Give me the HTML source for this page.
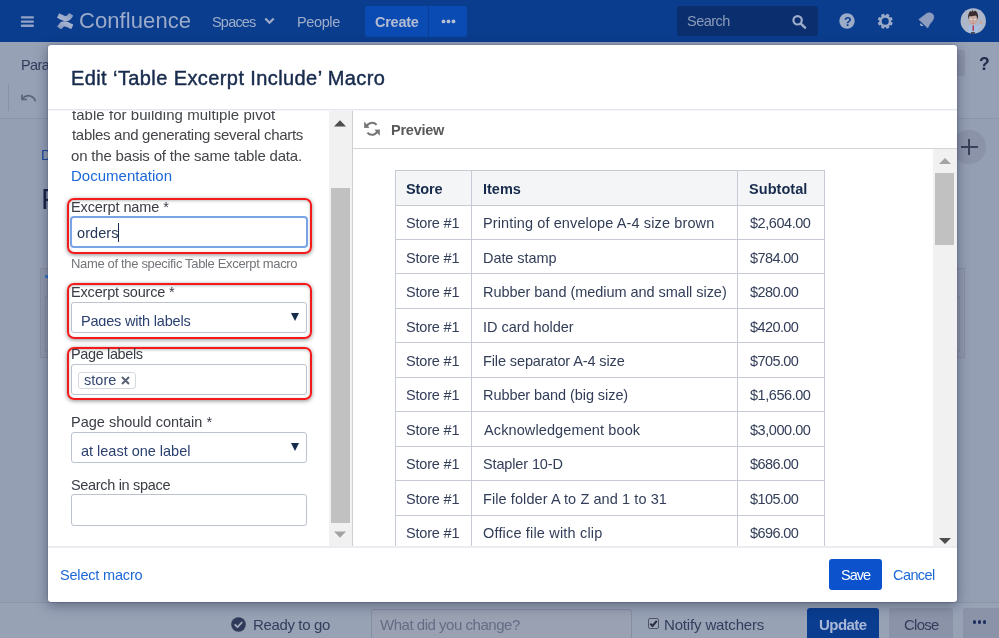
<!DOCTYPE html>
<html><head><meta charset="utf-8"><title>Edit Table Excerpt Include Macro</title>
<style>
*{box-sizing:border-box;margin:0;padding:0}
html,body{width:999px;height:638px;overflow:hidden}
body{font-family:"Liberation Sans",sans-serif;background:#959fb3;position:relative;color:#172b4d}
.a{position:absolute}
.t{position:absolute;white-space:pre;will-change:transform}
.red{position:absolute;border:2px solid #f51a1a;border-radius:7px;box-shadow:0 1px 4px rgba(0,0,0,.45), inset 0 1px 3px rgba(0,0,0,.25)}
.inp{position:absolute;border:1px solid #bcc3ce;border-radius:3px;background:#fff;overflow:hidden}
.arr{position:absolute;width:0;height:0;border-left:4px solid transparent;border-right:4px solid transparent;border-top:8px solid #172b4d}
.hl{position:absolute;height:1px}
.vl{position:absolute;width:1px}
</style></head><body>
<div class="a" style="left:0.00px;top:42.00px;width:999.00px;height:76.00px;background:#97a1b5"></div>
<div class="a" style="left:0.00px;top:117.50px;width:999.00px;height:1.00px;background:#8d95a8"></div>
<div class="t" style="left:21px;top:57px;font-size:14.5px;line-height:16px;font-weight:normal;color:#343e5c;letter-spacing:-0.588px;">Paragraph</div>
<div class="a" style="left:8.00px;top:84.00px;width:1.00px;height:27.00px;background:#8a91a3"></div>
<svg class="a" style="left:20px;top:92.200px" width="18" height="13" viewBox="0 0 18 13"><path d="M2 2.5v5h5M2.3 7.2C4.5 4.2 8 3 11 4.2c2.300.9 3.800 2.700 4.600 5" fill="none" stroke="#5b647c" stroke-width="1.700"/></svg>
<div class="t" style="left:41px;top:147px;font-size:14.5px;line-height:16px;font-weight:normal;color:#1f4aa0;letter-spacing:-4.500px;">D</div>
<div class="t" style="left:41px;top:182px;font-size:30px;line-height:33px;font-weight:normal;color:#1c2548;letter-spacing:0.900px;">P</div>
<div class="a" style="left:40.00px;top:268.00px;width:20.00px;height:89.60px;border:1px solid #8890a4;background:#929aae"></div>
<div class="a" style="left:45.00px;top:274.50px;width:7.00px;height:3.00px;background:#3a78c8"></div>
<div class="a" style="left:45.00px;top:296.00px;width:15.00px;height:56.00px;border:1px solid #8890a4;background:#959db0"></div>
<div class="a" style="left:940.00px;top:268.00px;width:24.50px;height:89.60px;border:1px solid #8890a4;background:#929aae"></div>
<div class="a" style="left:940.00px;top:296.00px;width:20.00px;height:56.00px;border:1px solid #8890a4;background:#959db0"></div>
<div class="a" style="left:944.00px;top:49.60px;width:20.70px;height:26.40px;background:#8d95a9;border-radius:3px"></div>
<div class="t" style="left:979px;top:54px;font-size:17.5px;line-height:20px;font-weight:bold;color:#1f2a4a;letter-spacing:-5.400px;">?</div>
<div class="a" style="left:952.00px;top:130.00px;width:34.00px;height:34.00px;background:#8b93a8;border-radius:50%"></div>
<div class="a" style="left:960.70px;top:145.90px;width:17.00px;height:2.30px;background:#39425a"></div>
<div class="a" style="left:968.00px;top:138.80px;width:2.30px;height:16.70px;background:#39425a"></div>
<div class="a" style="left:0.00px;top:601.50px;width:999.00px;height:36.50px;background:#98a2b5;border-top:1px solid #8b94a8"></div>
<svg class="a" style="left:231px;top:617px" width="15" height="15" viewBox="0 0 15 15"><circle cx="7.500" cy="7.500" r="7.300" fill="#2f3a5a"/><path d="M4.200 7.800l2.300 2.300 4.300-4.600" fill="none" stroke="#a4abbb" stroke-width="1.800" stroke-linecap="round" stroke-linejoin="round"/></svg>
<div class="t" style="left:253px;top:616px;font-size:15px;line-height:17px;font-weight:normal;color:#343e5c;letter-spacing:-0.360px;">Ready to go</div>
<div class="a" style="left:370.50px;top:609.00px;width:261.50px;height:36.00px;border:1px solid #878ea0;border-radius:3px;background:#9aa1b2"></div>
<div class="t" style="left:380px;top:616px;font-size:15px;line-height:17px;font-weight:normal;color:#646d85;letter-spacing:-0.474px;">What did you change?</div>
<div class="a" style="left:647.50px;top:617.50px;width:11.00px;height:11.00px;border:1px solid #4e566b;border-radius:2px;background:#9ea5b5"></div>
<svg class="a" style="left:647.5px;top:617.5px" width="11" height="11" viewBox="0 0 11 11"><path d="M2.300 5.600l2.200 2.300 4.300-5" fill="none" stroke="#262d44" stroke-width="2"/></svg>
<div class="t" style="left:664px;top:616px;font-size:15px;line-height:17px;font-weight:normal;color:#343e5c;letter-spacing:-0.157px;">Notify watchers</div>
<div class="a" style="left:807.00px;top:608.20px;width:71.70px;height:36.80px;background:#0a3d8f;border-radius:3px"></div>
<div class="t" style="left:819px;top:616px;font-size:15px;line-height:17px;font-weight:bold;color:#a9b8d6;letter-spacing:-0.540px;">Update</div>
<div class="a" style="left:889.30px;top:608.20px;width:63.40px;height:36.80px;background:#8b93a8;border-radius:3px"></div>
<div class="t" style="left:904px;top:616px;font-size:15px;line-height:17px;font-weight:normal;color:#343e5c;letter-spacing:-0.725px;">Close</div>
<div class="a" style="left:963.30px;top:608.20px;width:39.70px;height:36.80px;background:#8b93a8;border-radius:3px"></div>
<div class="a" style="left:972.60px;top:620.30px;width:3.40px;height:3.40px;background:#1d2f5f;border-radius:50%"></div>
<div class="a" style="left:977.80px;top:620.30px;width:3.40px;height:3.40px;background:#1d2f5f;border-radius:50%"></div>
<div class="a" style="left:983.00px;top:620.30px;width:3.40px;height:3.40px;background:#1d2f5f;border-radius:50%"></div>
<div class="a" style="left:0.00px;top:0.00px;width:999.00px;height:42.00px;background:#0b3d8e"></div>
<svg class="a" style="left:20px;top:15px" width="15" height="13" viewBox="20 15 15 13"><g fill="#92a2c4"><rect x="20.800" y="16.200" width="13.200" height="2.400" rx="1.100"/><rect x="20.800" y="20.400" width="13.200" height="2.400" rx="1.100"/><rect x="20.800" y="24.600" width="13.200" height="2.400" rx="1.100"/></g></svg>
<svg class="a" style="left:56.8px;top:12.600px" width="16.400" height="16.400" viewBox="1.500 1.500 29 29"><defs><linearGradient id="lg1" x1="0" y1="1" x2="1" y2="0"><stop offset="0" stop-color="#8093bb"/><stop offset="1" stop-color="#b6c0d6"/></linearGradient><linearGradient id="lg2" x1="1" y1="0" x2="0" y2="1"><stop offset="0" stop-color="#8093bb"/><stop offset="1" stop-color="#b6c0d6"/></linearGradient></defs><g>
<path fill="url(#lg1)" d="M3.100 23.600c-.3.500-.7 1.100-.9 1.500a.96.960 0 0 0 .32 1.300l6 3.700a.96.960 0 0 0 1.330-.32c.24-.4.550-.93.890-1.490 2.390-3.940 4.790-3.460 9.120-1.390l5.970 2.840a.96.960 0 0 0 1.290-.48l2.870-6.490a.96.960 0 0 0-.48-1.260c-1.260-.59-3.770-1.770-6.020-2.860-8.120-3.940-15.020-3.690-19.460 3.950z"/>
<path fill="url(#lg2)" d="M28.900 8.400c.3-.5.700-1.100.9-1.500a.96.960 0 0 0-.32-1.300l-6-3.700a.96.960 0 0 0-1.370.32c-.24.400-.55.930-.89 1.490-2.390 3.940-4.790 3.460-9.120 1.390L6.170 2.270a.96.960 0 0 0-1.290.48L2.010 9.240a.96.960 0 0 0 .48 1.260c1.260.590 3.770 1.770 6.020 2.860 8.120 3.930 15.020 3.670 19.460-3.960z"/></g></svg>
<div class="t" style="left:79px;top:8px;font-size:22px;line-height:25px;font-weight:normal;color:#9babc9;letter-spacing:0.078px;">Confluence</div>
<div class="t" style="left:212px;top:14px;font-size:14.5px;line-height:16px;font-weight:normal;color:#9eadca;letter-spacing:-0.800px;">Spaces</div>
<svg class="a" style="left:264px;top:17px" width="11" height="8" viewBox="0 0 11 8"><path d="M1.300 1.500l4.200 4.200 4.200-4.200" fill="none" stroke="#9eadca" stroke-width="2.200"/></svg>
<div class="t" style="left:297px;top:14px;font-size:14.5px;line-height:16px;font-weight:normal;color:#9eadca;letter-spacing:-0.380px;">People</div>
<div class="a" style="left:364.70px;top:5.60px;width:102.30px;height:31.40px;background:#0a4bb3;border-radius:3px"></div>
<div class="a" style="left:428.00px;top:5.60px;width:1.00px;height:31.40px;background:#0b3f96"></div>
<div class="t" style="left:375px;top:14px;font-size:14.5px;line-height:16px;font-weight:bold;color:#b4bdd2;letter-spacing:-0.260px;">Create</div>
<svg class="a" style="left:441.2px;top:19px" width="5" height="5"><circle cx="2.5" cy="2.400" r="1.900" fill="#b4bdd2"/></svg>
<svg class="a" style="left:446.3px;top:19px" width="5" height="5"><circle cx="2.5" cy="2.400" r="1.900" fill="#b4bdd2"/></svg>
<svg class="a" style="left:451.4px;top:19px" width="5" height="5"><circle cx="2.5" cy="2.400" r="1.900" fill="#b4bdd2"/></svg>
<div class="a" style="left:677.00px;top:5.80px;width:141.00px;height:30.20px;background:#0b2f6e;border-radius:3px"></div>
<div class="t" style="left:687px;top:13px;font-size:14.5px;line-height:16px;font-weight:normal;color:#8a9aba;letter-spacing:-0.520px;">Search</div>
<svg class="a" style="left:791px;top:14px" width="16" height="15" viewBox="0 0 16 15"><circle cx="6.600" cy="6.300" r="4.200" fill="none" stroke="#9eadca" stroke-width="2.200"/><path d="M9.800 9.600l4.200 4" stroke="#9eadca" stroke-width="2.600" stroke-linecap="round"/></svg>
<svg class="a" style="left:839.3px;top:13.300px" width="16" height="16" viewBox="0 0 16 16"><circle cx="8" cy="8" r="7.700" transform="translate(0,0)" fill="#9cabc8"/></svg>
<div class="t" style="left:844px;top:15px;font-size:12.5px;line-height:14px;font-weight:bold;color:#0b3d8e;letter-spacing:-0.900px;">?</div>
<svg class="a" style="left:876.8px;top:13.200px" width="16.500" height="16.500" viewBox="-8.250 -8.250 16.500 16.500"><g fill="#9cabc8">
<circle r="5.900"/><rect x="-1.600" y="-7.500" width="3.200" height="3" rx="0.400" transform="rotate(22.5)"/><rect x="-1.600" y="-7.500" width="3.200" height="3" rx="0.400" transform="rotate(67.5)"/><rect x="-1.600" y="-7.500" width="3.200" height="3" rx="0.400" transform="rotate(112.5)"/><rect x="-1.600" y="-7.500" width="3.200" height="3" rx="0.400" transform="rotate(157.5)"/><rect x="-1.600" y="-7.500" width="3.200" height="3" rx="0.400" transform="rotate(202.5)"/><rect x="-1.600" y="-7.500" width="3.200" height="3" rx="0.400" transform="rotate(247.5)"/><rect x="-1.600" y="-7.500" width="3.200" height="3" rx="0.400" transform="rotate(292.5)"/><rect x="-1.600" y="-7.500" width="3.200" height="3" rx="0.400" transform="rotate(337.5)"/></g><circle r="3.500" fill="#0b3d8e"/></svg>
<svg class="a" style="left:915px;top:10px" width="22" height="22" viewBox="915 10 22 22"><path d="M918.800 19.400L926.300 13.700Q928.500 12.400 930.600 13L932.700 14.100Q934 15.800 933.800 18.100Q932.600 21.500 929.900 23.900L927.700 27.900Z" fill="#8e9dbf" stroke="#8e9dbf" stroke-width=".6" stroke-linejoin="round"/><path d="M920.300 23.200a1.900 1.900 0 0 0 3 2.300z" fill="#a9b6d2"/></svg>
<svg class="a" style="left:960px;top:8px" width="26.500" height="26.500" viewBox="960 8 26.500 26.500"><defs><clipPath id="av"><circle cx="973.250" cy="21.050" r="12.700"/></clipPath></defs>
<circle cx="973.250" cy="21.050" r="12.700" fill="#aeb7ca"/><g clip-path="url(#av)">
<path d="M971 31h3.800v3h-3.800z" fill="#23262f"/>
<path d="M968.300 32.200c-.3-3.500.5-6.300 2.200-7.300h5c1 .5 1.700 1.300 2.300 2.300l2.700-3.600 1.300 1-3.300 5.300-1-.4.100 2.700z" fill="#a6bfe3"/>
<path d="M972.500 25.500h1.500v5l-.75.800-.75-.8z" fill="#bd3a4a"/>
<circle cx="981" cy="22.400" r="1.700" fill="#c8a89c"/>
<ellipse cx="973.100" cy="20" rx="4.300" ry="4.600" fill="#c8a89c"/>
<path d="M968.400 19.500c-1-4 .8-7.800 2.500-8.400l.9 1 .6-2.400 1.300 2 1.500-1.300c2.300 1.500 3.500 4.700 2.600 9-.6-2.300-1.400-3.500-2.400-4-2.300.9-4.400.9-5.600.6-.8.800-1.200 2-1.400 3.500z" fill="#3b2c2d"/>
<circle cx="971.300" cy="19.300" r=".9" fill="#dfe6f0"/><circle cx="975" cy="19.300" r=".9" fill="#dfe6f0"/>
<path d="M972.200 23.300h1.800v.7h-1.800z" fill="#c0707a"/>
</g></svg>
<div class="a" style="left:48.40px;top:44.90px;width:908.60px;height:556.70px;background:#fff;border-radius:3px;box-shadow:0 3px 13px rgba(9,20,50,.42),0 0 2px rgba(9,20,50,.3)"></div>
<div class="t" style="left:71px;top:67px;font-size:20px;line-height:22px;font-weight:normal;color:#172b4d;letter-spacing:0.406px;-webkit-text-stroke:.45px #172b4d;">Edit ‘Table Excerpt Include’ Macro</div>
<div class="a" style="left:48.40px;top:109.00px;width:908.60px;height:1.00px;background:#e4e6ee"></div>
<div class="a" style="left:48.40px;top:110.00px;width:908.60px;height:1.00px;background:#f3f4f8"></div>
<div class="a" style="left:49.00px;top:111.00px;width:303.00px;height:435.00px;overflow:hidden"><div class="t" style="left:23px;top:-5px;font-size:15px;line-height:17px;font-weight:normal;color:#434549;letter-spacing:0.047px;">table for building multiple pivot</div><div class="t" style="left:23px;top:15px;font-size:15px;line-height:17px;font-weight:normal;color:#434549;letter-spacing:-0.300px;">tables and generating several charts</div><div class="t" style="left:22px;top:36px;font-size:15px;line-height:17px;font-weight:normal;color:#434549;letter-spacing:-0.186px;">on the basis of the same table data.</div><div class="t" style="left:22px;top:56px;font-size:15px;line-height:17px;font-weight:normal;color:#1c68d8;letter-spacing:0.008px;">Documentation</div><div class="red" style="left:17.60px;top:86.70px;width:245.60px;height:56.70px;"></div><div class="red" style="left:17.60px;top:171.70px;width:245.60px;height:56.30px;"></div><div class="red" style="left:17.60px;top:235.90px;width:245.60px;height:52.70px;"></div><div class="t" style="left:22px;top:88px;font-size:14.5px;line-height:16px;font-weight:normal;color:#3a3d45;letter-spacing:-0.100px;">Excerpt name *</div><div class="inp" style="left:21.30px;top:105.00px;width:237.40px;height:32.20px;border:2px solid #78a4e6;border-radius:4px"></div><div class="t" style="left:28px;top:114px;font-size:14.5px;line-height:16px;font-weight:normal;color:#253858;letter-spacing:0.080px;">orders</div><div class="a" style="left:68.60px;top:112.00px;width:1.20px;height:18.50px;background:#172b4d"></div><div class="t" style="left:22px;top:145px;font-size:13px;line-height:15px;font-weight:normal;color:#727579;letter-spacing:-0.336px;">Name of the specific Table Excerpt macro</div><div class="t" style="left:22px;top:173px;font-size:14.5px;line-height:16px;font-weight:normal;color:#3a3d45;letter-spacing:-0.180px;">Excerpt source *</div><div class="inp" style="left:22.30px;top:191.00px;width:236.00px;height:31.00px;"><div class="a" style="left:0;top:0;width:100%;height:23.200px;overflow:hidden"><div class="t" style="left:9px;top:10px;font-size:14.5px;line-height:16px;font-weight:normal;color:#2b4170;letter-spacing:-0.194px;">Pages with labels</div></div><i class="arr" style="left:218.4px;top:10.3px"></i></div><div class="t" style="left:22px;top:235px;font-size:14.5px;line-height:16px;font-weight:normal;color:#3a3d45;letter-spacing:-0.370px;">Page labels</div><div class="inp" style="left:22.30px;top:253.00px;width:236.00px;height:31.30px;"></div><div class="a" style="left:28.50px;top:260.50px;width:58.30px;height:17.50px;border:1px solid #d5d9e0;border-radius:3px;background:#fff"></div><div class="t" style="left:35px;top:261px;font-size:14.5px;line-height:16px;font-weight:normal;color:#33476f;letter-spacing:0.025px;">store</div><svg class="a" style="left:71.7px;top:265.2px" width="9" height="9" viewBox="0 0 9 9"><path d="M1 1l7 7M8 1l-7 7" stroke="#5a6376" stroke-width="2"/></svg><div class="t" style="left:22px;top:303px;font-size:14.5px;line-height:16px;font-weight:normal;color:#3a3d45;letter-spacing:0.000px;">Page should contain *</div><div class="inp" style="left:22.30px;top:321.00px;width:236.00px;height:31.00px;"><div class="t" style="left:9px;top:10px;font-size:14.5px;line-height:16px;font-weight:normal;color:#2b4170;letter-spacing:-0.012px;">at least one label</div><i class="arr" style="left:218.4px;top:9.8px"></i></div><div class="t" style="left:22px;top:366px;font-size:14.5px;line-height:16px;font-weight:normal;color:#3a3d45;letter-spacing:-0.321px;">Search in space</div><div class="inp" style="left:22.30px;top:383.00px;width:236.00px;height:31.70px;"></div><div class="a" style="left:280.00px;top:-1.00px;width:23.00px;height:437.00px;background:#f1f1f1"></div><div class="a" style="left:282.00px;top:76.50px;width:19.20px;height:335.70px;background:#c1c1c1"></div><svg class="a" style="left:285.3px;top:9.0px" width="12" height="7" viewBox="0 0 12 7"><path d="M0 6.500L6 .3l6 6.200z" fill="#4d4d4d"/></svg><svg class="a" style="left:285.3px;top:420.3px" width="12" height="7" viewBox="0 0 12 7"><path d="M0 .5L6 6.700 12 .5z" fill="#a3a3a3"/></svg></div>
<div class="a" style="left:352.00px;top:111.00px;width:1.00px;height:435.00px;background:#cfcfcf"></div>
<svg class="a" style="left:364px;top:121px" width="16" height="16" viewBox="0 0 16 16"><g fill="none" stroke="#767676" stroke-width="2"><path d="M2.300 6.200A6 6 0 0 1 12.600 3.900"/><path d="M13.800 9.300A6 6 0 0 1 3.400 11.700"/></g><path d="M0.200 0.500V7L5.600 6.800z" fill="#767676"/><path d="M15.800 8.500v6.200L10.400 8.800z" fill="#767676"/></svg>
<div class="t" style="left:391px;top:122px;font-size:14.5px;line-height:16px;font-weight:bold;color:#595959;letter-spacing:-0.250px;">Preview</div>
<div class="a" style="left:353.00px;top:148.00px;width:604.00px;height:1.00px;background:#d4d4d4"></div>
<div class="a" style="left:353.00px;top:149.00px;width:604.00px;height:397.00px;overflow:hidden"><div class="a" style="left:42.00px;top:21.10px;width:430.00px;height:34.45px;background:#f4f5f7"></div><div class="a" style="left:42.00px;top:21.10px;width:430.00px;height:1.00px;background:#c5cad4"></div><div class="a" style="left:42.00px;top:55.55px;width:430.00px;height:1.00px;background:#c5cad4"></div><div class="a" style="left:42.00px;top:90.00px;width:430.00px;height:1.00px;background:#c5cad4"></div><div class="a" style="left:42.00px;top:124.45px;width:430.00px;height:1.00px;background:#c5cad4"></div><div class="a" style="left:42.00px;top:158.90px;width:430.00px;height:1.00px;background:#c5cad4"></div><div class="a" style="left:42.00px;top:193.35px;width:430.00px;height:1.00px;background:#c5cad4"></div><div class="a" style="left:42.00px;top:227.80px;width:430.00px;height:1.00px;background:#c5cad4"></div><div class="a" style="left:42.00px;top:262.25px;width:430.00px;height:1.00px;background:#c5cad4"></div><div class="a" style="left:42.00px;top:296.70px;width:430.00px;height:1.00px;background:#c5cad4"></div><div class="a" style="left:42.00px;top:331.15px;width:430.00px;height:1.00px;background:#c5cad4"></div><div class="a" style="left:42.00px;top:365.60px;width:430.00px;height:1.00px;background:#c5cad4"></div><div class="a" style="left:42.00px;top:400.05px;width:430.00px;height:1.00px;background:#c5cad4"></div><div class="a" style="left:42.00px;top:434.50px;width:430.00px;height:1.00px;background:#c5cad4"></div><div class="a" style="left:42.00px;top:21.10px;width:1.00px;height:413.40px;background:#c5cad4"></div><div class="a" style="left:118.00px;top:21.10px;width:1.00px;height:413.40px;background:#c5cad4"></div><div class="a" style="left:384.00px;top:21.10px;width:1.00px;height:413.40px;background:#c5cad4"></div><div class="a" style="left:471.00px;top:21.10px;width:1.00px;height:413.40px;background:#c5cad4"></div><div class="t" style="left:53px;top:32px;font-size:14.5px;line-height:16px;font-weight:bold;color:#172b4d;letter-spacing:-0.150px;">Store</div><div class="t" style="left:130px;top:32px;font-size:14.5px;line-height:16px;font-weight:bold;color:#172b4d;letter-spacing:-0.000px;">Items</div><div class="t" style="left:396px;top:32px;font-size:14.5px;line-height:16px;font-weight:bold;color:#172b4d;letter-spacing:0.057px;">Subtotal</div><div class="t" style="left:53px;top:66px;font-size:14.5px;line-height:16px;font-weight:normal;color:#323d58;letter-spacing:-0.186px;">Store #1</div><div class="t" style="left:130px;top:66px;font-size:14.5px;line-height:16px;font-weight:normal;color:#323d58;letter-spacing:0.115px;">Printing of envelope A-4 size brown</div><div class="t" style="left:397px;top:66px;font-size:14.5px;line-height:16px;font-weight:normal;color:#323d58;letter-spacing:-0.450px;">$2,604.00</div><div class="t" style="left:53px;top:101px;font-size:14.5px;line-height:16px;font-weight:normal;color:#323d58;letter-spacing:-0.186px;">Store #1</div><div class="t" style="left:130px;top:101px;font-size:14.5px;line-height:16px;font-weight:normal;color:#323d58;letter-spacing:-0.078px;">Date stamp</div><div class="t" style="left:397px;top:101px;font-size:14.5px;line-height:16px;font-weight:normal;color:#323d58;letter-spacing:-0.583px;">$784.00</div><div class="t" style="left:53px;top:135px;font-size:14.5px;line-height:16px;font-weight:normal;color:#323d58;letter-spacing:-0.186px;">Store #1</div><div class="t" style="left:130px;top:135px;font-size:14.5px;line-height:16px;font-weight:normal;color:#323d58;letter-spacing:-0.038px;">Rubber band (medium and small size)</div><div class="t" style="left:397px;top:135px;font-size:14.5px;line-height:16px;font-weight:normal;color:#323d58;letter-spacing:-0.583px;">$280.00</div><div class="t" style="left:53px;top:170px;font-size:14.5px;line-height:16px;font-weight:normal;color:#323d58;letter-spacing:-0.186px;">Store #1</div><div class="t" style="left:130px;top:170px;font-size:14.5px;line-height:16px;font-weight:normal;color:#323d58;letter-spacing:-0.038px;">ID card holder</div><div class="t" style="left:397px;top:170px;font-size:14.5px;line-height:16px;font-weight:normal;color:#323d58;letter-spacing:-0.583px;">$420.00</div><div class="t" style="left:53px;top:204px;font-size:14.5px;line-height:16px;font-weight:normal;color:#323d58;letter-spacing:-0.186px;">Store #1</div><div class="t" style="left:130px;top:204px;font-size:14.5px;line-height:16px;font-weight:normal;color:#323d58;letter-spacing:-0.114px;">File separator A-4 size</div><div class="t" style="left:397px;top:204px;font-size:14.5px;line-height:16px;font-weight:normal;color:#323d58;letter-spacing:-0.583px;">$705.00</div><div class="t" style="left:53px;top:238px;font-size:14.5px;line-height:16px;font-weight:normal;color:#323d58;letter-spacing:-0.186px;">Store #1</div><div class="t" style="left:130px;top:238px;font-size:14.5px;line-height:16px;font-weight:normal;color:#323d58;letter-spacing:-0.071px;">Rubber band (big size)</div><div class="t" style="left:397px;top:238px;font-size:14.5px;line-height:16px;font-weight:normal;color:#323d58;letter-spacing:-0.450px;">$1,656.00</div><div class="t" style="left:53px;top:273px;font-size:14.5px;line-height:16px;font-weight:normal;color:#323d58;letter-spacing:-0.186px;">Store #1</div><div class="t" style="left:131px;top:273px;font-size:14.5px;line-height:16px;font-weight:normal;color:#323d58;letter-spacing:0.111px;">Acknowledgement book</div><div class="t" style="left:397px;top:273px;font-size:14.5px;line-height:16px;font-weight:normal;color:#323d58;letter-spacing:-0.450px;">$3,000.00</div><div class="t" style="left:53px;top:307px;font-size:14.5px;line-height:16px;font-weight:normal;color:#323d58;letter-spacing:-0.186px;">Store #1</div><div class="t" style="left:130px;top:307px;font-size:14.5px;line-height:16px;font-weight:normal;color:#323d58;letter-spacing:-0.136px;">Stapler 10-D</div><div class="t" style="left:397px;top:307px;font-size:14.5px;line-height:16px;font-weight:normal;color:#323d58;letter-spacing:-0.583px;">$686.00</div><div class="t" style="left:53px;top:342px;font-size:14.5px;line-height:16px;font-weight:normal;color:#323d58;letter-spacing:-0.186px;">Store #1</div><div class="t" style="left:130px;top:342px;font-size:14.5px;line-height:16px;font-weight:normal;color:#323d58;letter-spacing:0.086px;">File folder A to Z and 1 to 31</div><div class="t" style="left:397px;top:342px;font-size:14.5px;line-height:16px;font-weight:normal;color:#323d58;letter-spacing:-0.583px;">$105.00</div><div class="t" style="left:53px;top:376px;font-size:14.5px;line-height:16px;font-weight:normal;color:#323d58;letter-spacing:-0.186px;">Store #1</div><div class="t" style="left:130px;top:376px;font-size:14.5px;line-height:16px;font-weight:normal;color:#323d58;letter-spacing:0.175px;">Office file with clip</div><div class="t" style="left:397px;top:376px;font-size:14.5px;line-height:16px;font-weight:normal;color:#323d58;letter-spacing:-0.583px;">$696.00</div><div class="a" style="left:580.00px;top:0.00px;width:24.00px;height:398.00px;background:#f1f1f1"></div><div class="a" style="left:582.30px;top:23.50px;width:18.70px;height:72.30px;background:#c1c1c1"></div><svg class="a" style="left:585.5px;top:8.8px" width="12" height="6" viewBox="0 0 12 6"><path d="M0 6L6 0l6 6z" fill="#a3a3a3"/></svg><svg class="a" style="left:585.8px;top:388.8px" width="12" height="6" viewBox="0 0 12 6"><path d="M0 0L6 6 12 0z" fill="#4d4d4d"/></svg></div>
<div class="a" style="left:48.40px;top:546.00px;width:908.60px;height:2.00px;background:#ebecf0"></div>
<div class="t" style="left:60px;top:567px;font-size:14.5px;line-height:16px;font-weight:normal;color:#1c68d8;letter-spacing:-0.182px;">Select macro</div>
<div class="a" style="left:829.00px;top:559.30px;width:52.50px;height:30.30px;background:#0b52cc;border-radius:3px"></div>
<div class="t" style="left:841px;top:567px;font-size:14.5px;line-height:16px;font-weight:normal;color:#fff;letter-spacing:-1.000px;">Save</div>
<div class="t" style="left:893px;top:567px;font-size:14.5px;line-height:16px;font-weight:normal;color:#1c68d8;letter-spacing:-0.580px;">Cancel</div>
</body></html>
